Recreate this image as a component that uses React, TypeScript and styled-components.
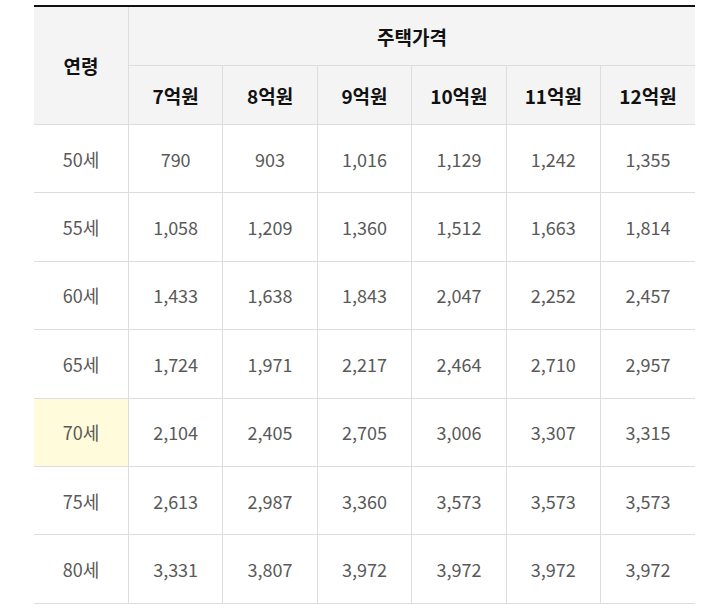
import React from 'react';
import styled, { createGlobalStyle } from 'styled-components';

const GlobalStyle = createGlobalStyle`
  html, body {
    margin: 0;
    padding: 0;
    background: #fff;
  }
  body {
    font-family: "Noto Sans CJK KR", "Noto Sans", sans-serif;
  }
`;

const Page = styled.div`
  padding: 5px 32px 0 34px;
`;

const Table = styled.table`
  width: 661px;
  table-layout: fixed;
  border-collapse: collapse;
  border-top: 2px solid #111;
`;

const HeadCell = styled.th`
  height: 58px;
  padding: 0;
  background: #f4f4f4;
  border: 1px solid #dddddd;
  border-top: none;
  color: #111;
  font-size: 19px;
  font-weight: 700;
  text-align: center;
  vertical-align: middle;

  &:first-child {
    border-left: none;
  }
  &:last-child {
    border-right: none;
  }
`;

const Cell = styled.td<{ $highlight?: boolean }>`
  height: 67.4px;
  padding: 0;
  border: 1px solid #dddddd;
  background: ${(p) => (p.$highlight ? '#fffbdb' : '#fff')};
  color: #595959;
  font-size: 18px;
  text-align: center;
  vertical-align: middle;

  &:first-child {
    border-left: none;
  }
  &:last-child {
    border-right: none;
  }
`;

const prices = ['7억원', '8억원', '9억원', '10억원', '11억원', '12억원'];

const rows: { age: string; values: string[]; highlight?: boolean }[] = [
  { age: '50세', values: ['790', '903', '1,016', '1,129', '1,242', '1,355'] },
  { age: '55세', values: ['1,058', '1,209', '1,360', '1,512', '1,663', '1,814'] },
  { age: '60세', values: ['1,433', '1,638', '1,843', '2,047', '2,252', '2,457'] },
  { age: '65세', values: ['1,724', '1,971', '2,217', '2,464', '2,710', '2,957'] },
  { age: '70세', values: ['2,104', '2,405', '2,705', '3,006', '3,307', '3,315'], highlight: true },
  { age: '75세', values: ['2,613', '2,987', '3,360', '3,573', '3,573', '3,573'] },
  { age: '80세', values: ['3,331', '3,807', '3,972', '3,972', '3,972', '3,972'] },
];

const App = (): JSX.Element => (
  <Page>
    <GlobalStyle />
    <Table>
      <thead>
        <tr>
          <HeadCell rowSpan={2}>연령</HeadCell>
          <HeadCell colSpan={6}>주택가격</HeadCell>
        </tr>
        <tr>
          {prices.map((p) => (
            <HeadCell key={p}>{p}</HeadCell>
          ))}
        </tr>
      </thead>
      <tbody>
        {rows.map((row) => (
          <tr key={row.age}>
            <Cell $highlight={row.highlight}>{row.age}</Cell>
            {row.values.map((v, i) => (
              <Cell key={i}>{v}</Cell>
            ))}
          </tr>
        ))}
      </tbody>
    </Table>
  </Page>
);

export default App;
